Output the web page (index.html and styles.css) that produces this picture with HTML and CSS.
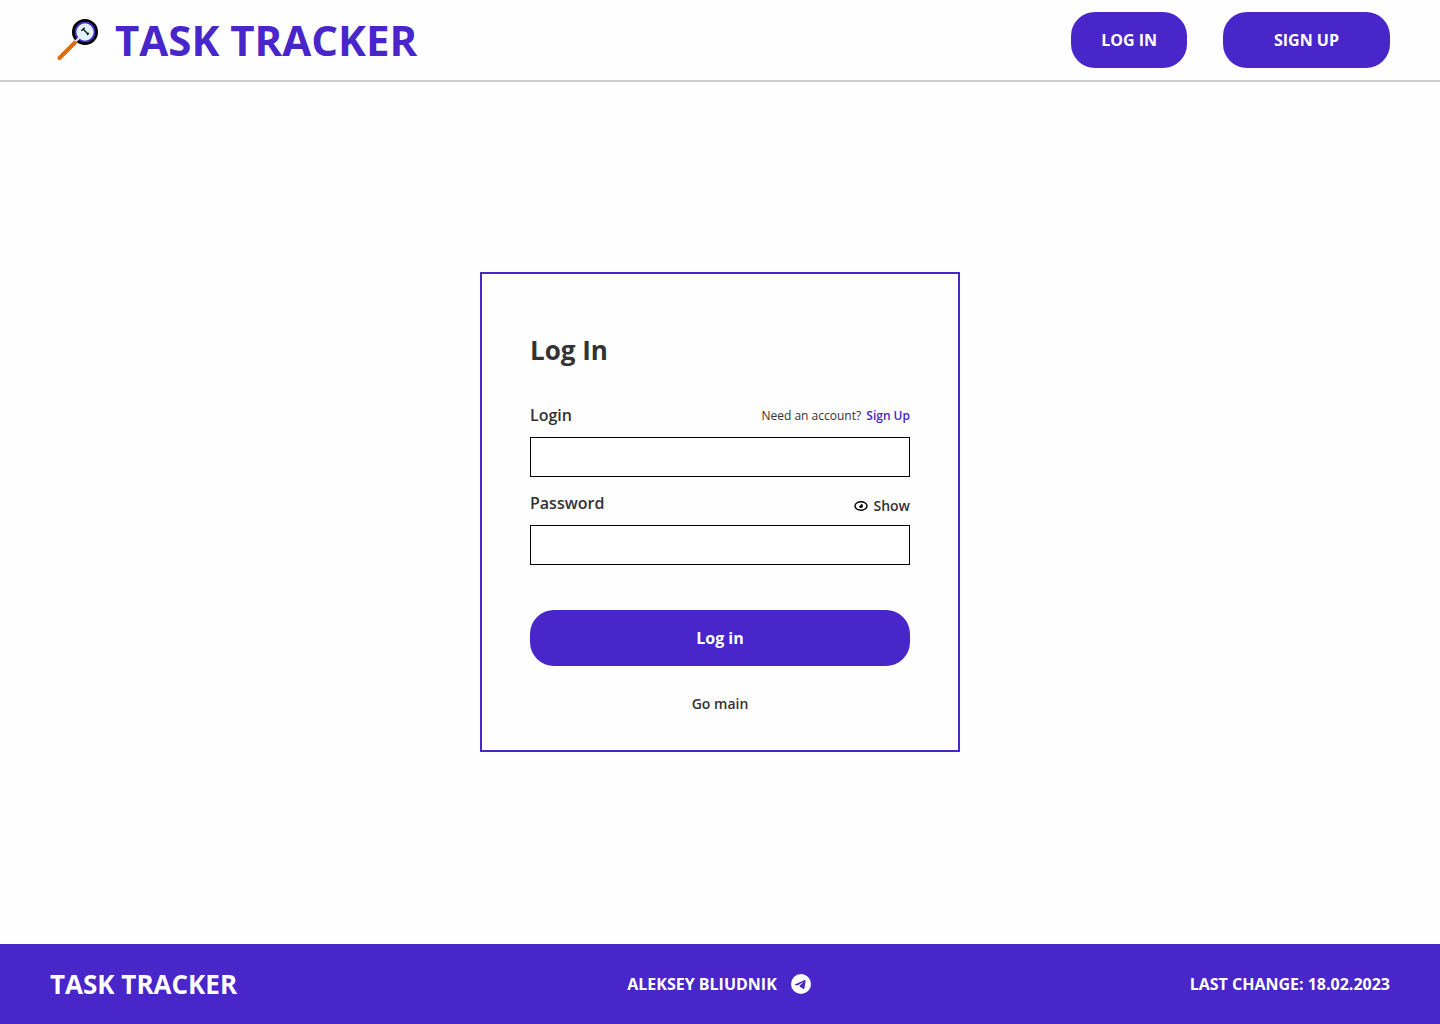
FILE: index.html
```html
<!DOCTYPE html>
<html lang="en">
<head>
  <meta charset="utf-8">
  <meta name="viewport" content="width=device-width, initial-scale=1">
  <title>Task Tracker – Log In</title>
  <link rel="stylesheet" href="styles.css">
</head>
<body>
  <header class="header">
    <a class="brand" href="#">
      <svg class="brand-icon" viewBox="0 5 50 50" aria-hidden="true">
        <path d="M9.500 48L25 32.500" stroke="#dd6b08" stroke-width="4" stroke-linecap="round"/>
        <circle cx="35" cy="22" r="11.500" fill="#def3fd" stroke="#000" stroke-width="3"/>
        <circle cx="35" cy="22" r="9.500" fill="none" stroke="#4826ca" stroke-width="1.700"/>
        <path d="M25.500 31.500L29.500 27.500" stroke="#dcd6f6" stroke-width="2.400"/>
        <path d="M31.300 20.700L34.700 17.700M33 19L38 24M37 25L39 23" stroke="#111" stroke-width="1.300" fill="none"/>
      </svg>
      <span>TASK TRACKER</span>
    </a>
    <nav class="actions">
      <button class="button button-login" type="button">LOG IN</button>
      <button class="button button-signup" type="button">SIGN UP</button>
    </nav>
  </header>

  <main class="main">
    <form class="card">
      <h1 class="title">Log In</h1>
      <div class="field">
        <div class="field-head">
          <label class="label" for="login">Login</label>
          <p class="hint">Need an account? <a class="hint-link" href="#">Sign Up</a></p>
        </div>
        <input class="input" id="login" type="text">
      </div>
      <div class="field">
        <div class="field-head">
          <label class="label" for="password">Password</label>
          <button class="show" type="button">
            <svg class="eye" viewBox="0 0 14 14" aria-hidden="true">
              <ellipse cx="7" cy="7" rx="6" ry="4.200" fill="none" stroke="#000" stroke-width="1.400"/>
              <path d="M7 5A2 2 0 1 1 5 7Q7 7 7 5Z" fill="#000"/>
            </svg>
            Show
          </button>
        </div>
        <input class="input" id="password" type="password">
      </div>
      <button class="button button-submit" type="submit">Log in</button>
      <a class="back" href="#">Go main</a>
    </form>
  </main>

  <footer class="footer">
    <span class="footer-brand">TASK TRACKER</span>
    <a class="author" href="#">
      ALEKSEY BLIUDNIK
      <svg class="telegram" viewBox="0 0 24 24" aria-hidden="true">
        <circle cx="12" cy="12" r="10" fill="#fff"/>
        <path d="M16.640 8.800C16.490 10.380 15.840 14.220 15.510 15.990C15.370 16.740 15.090 16.990 14.830 17.020C14.250 17.070 13.810 16.640 13.250 16.270C12.370 15.690 11.870 15.330 11.020 14.770C10.030 14.120 10.670 13.760 11.240 13.180C11.390 13.030 13.950 10.700 14 10.490C14.010 10.460 14.010 10.370 13.950 10.320C13.890 10.270 13.810 10.290 13.740 10.300C13.650 10.320 12.250 11.240 9.520 13.080C9.120 13.350 8.760 13.490 8.440 13.480C8.080 13.470 7.400 13.280 6.890 13.110C6.260 12.910 5.770 12.800 5.810 12.450C5.830 12.270 6.080 12.090 6.550 11.900C9.470 10.630 11.410 9.790 12.380 9.390C15.160 8.230 15.730 8.030 16.110 8.030C16.190 8.030 16.380 8.050 16.500 8.150C16.600 8.230 16.630 8.340 16.640 8.420C16.630 8.480 16.650 8.660 16.640 8.800Z" fill="#4826ca"/>
      </svg>
    </a>
    <span class="updated">LAST CHANGE: 18.02.2023</span>
  </footer>
</body>
</html>
```
FILE: styles.css
```css
*,
*::before,
*::after {
  box-sizing: border-box;
}

body {
  display: flex;
  flex-direction: column;
  min-height: 100vh;
  margin: 0;
  background: #fefefe;
  color: #333;
  font-family: "Open Sans", "Noto Sans", sans-serif;
  font-size: 16px;
  line-height: 24px;
}

a {
  color: inherit;
  text-decoration: none;
}

h1,
p {
  margin: 0;
}

button,
input {
  font: inherit;
  color: inherit;
}

.header {
  display: flex;
  align-items: center;
  justify-content: space-between;
  min-height: 80px;
  padding: 11px 50px;
  box-shadow: 0 2px 0 #d0d0d0;
}

.brand {
  display: flex;
  align-items: center;
  gap: 15px;
  color: #4826ca;
  font-size: 42px;
  font-weight: 700;
  line-height: 58px;
}

.brand-icon {
  width: 50px;
  height: 50px;
}

.actions {
  display: flex;
  gap: 36px;
}

.button {
  height: 56px;
  border: 0;
  border-radius: 24px;
  background: #4826ca;
  color: #fff;
  font-weight: 700;
  cursor: pointer;
}

.button-login {
  padding: 0 30px;
}

.button-signup {
  padding: 0 51px;
}

.main {
  display: flex;
  flex: 1;
  align-items: center;
  justify-content: center;
  padding: 40px 20px;
}

.card {
  display: flex;
  flex-direction: column;
  width: 100%;
  max-width: 480px;
  padding: 58px 48px 34px;
  border: 2px solid #4826ca;
}

.title {
  margin-bottom: 35px;
  font-size: 26px;
  font-weight: 700;
  line-height: 36px;
}

.field {
  margin-bottom: 14px;
}

.field-head {
  display: flex;
  align-items: center;
  justify-content: space-between;
  margin-bottom: 10px;
}

.label {
  font-weight: 600;
}

.hint {
  font-size: 12px;
  line-height: 26px;
  margin-bottom: -2px;
}

.hint-link {
  margin-left: 2px;
  color: #4826ca;
  font-weight: 600;
}

.show {
  display: flex;
  align-items: center;
  align-self: flex-end;
  gap: 5px;
  padding: 0;
  border: 0;
  background: none;
  font-size: 14px;
  font-weight: 600;
  line-height: 18px;
  cursor: pointer;
}

.eye {
  width: 14px;
  height: 14px;
}

.input {
  display: block;
  width: 100%;
  height: 40px;
  padding: 0 10px;
  border: 1px solid #000;
  border-radius: 0;
  background: #fff;
}

.button-submit {
  margin-top: 31px;
}

.back {
  align-self: center;
  margin-top: 26px;
  font-size: 14px;
  font-weight: 600;
}

.footer {
  display: grid;
  grid-template-columns: 1fr auto 1fr;
  align-items: center;
  min-height: 80px;
  padding: 0 50px;
  background: #4826ca;
  color: #fff;
  font-weight: 700;
}

.footer-brand {
  font-size: 26px;
  line-height: 36px;
}

.author {
  display: flex;
  align-items: center;
  gap: 12px;
}

.telegram {
  width: 24px;
  height: 24px;
}

.updated {
  text-align: right;
}
```
